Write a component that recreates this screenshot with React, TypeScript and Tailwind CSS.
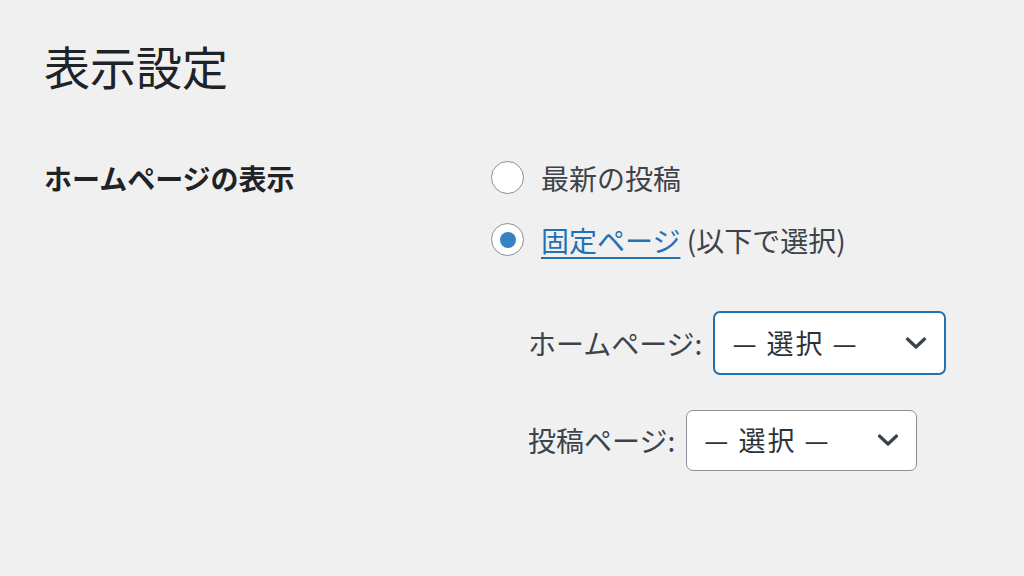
const jp = { fontFamily: '"Noto Sans CJK JP", "Noto Sans", sans-serif' };

function Chevron() {
  return (
    <svg width="22" height="14" viewBox="0 0 22 14" fill="none">
      <path d="M2.5 3 L11 11 L19.5 3" stroke="#3c434a" strokeWidth="3.2" strokeLinecap="round" strokeLinejoin="round" />
    </svg>
  );
}

function Select({ focused, width, height }: { focused?: boolean; width: string; height: string }) {
  return (
    <div
      className={`flex items-center justify-between bg-white rounded-[7px] pl-[17px] pr-[17px] ${width} ${height} ${
        focused ? "border-[2.5px] border-[#2271b1]" : "border border-[#8c8f94]"
      }`}
    >
      <span className="text-[27px] tracking-[2px] text-[#2c3338]">— 選択 —</span>
      <Chevron />
    </div>
  );
}

export default function App() {
  return (
    <div className="min-h-[576px] w-[1024px] bg-[#f0f0f1] px-[44px] pt-[36px]" style={jp}>
      <h1 className="text-[46px] leading-[1.3] text-[#1d2327] font-normal">表示設定</h1>

      <div className="flex mt-[62px]">
        <div className="w-[447px] text-[28px] font-bold text-[#1d2327] leading-[40px]">
          ホームページの表示
        </div>
        <div className="flex flex-col">
          <label className="flex items-center gap-[17px] h-[40px]">
            <span className="w-[33px] h-[33px] rounded-full bg-white border-[1.5px] border-[#8c8f94]" />
            <span className="text-[28px] text-[#3c434a]">最新の投稿</span>
          </label>
          <label className="flex items-center gap-[17px] h-[40px] mt-[22px]">
            <span className="w-[33px] h-[33px] rounded-full bg-white border-[1.5px] border-[#8c8f94] flex items-center justify-center">
              <span className="w-[16px] h-[16px] rounded-full bg-[#3582c4]" />
            </span>
            <span className="text-[28px] text-[#3c434a]">
              <span className="text-[#2271b1] underline underline-offset-[5px] decoration-[2px]">固定ページ</span> (以下で選択)
            </span>
          </label>

          <div className="ml-[37px] mt-[51px] flex flex-col gap-[35px]">
            <div className="flex items-center gap-[11px]">
              <span className="text-[28px] text-[#3c434a]">ホームページ:</span>
              <Select focused width="w-[233px]" height="h-[64px]" />
            </div>
            <div className="flex items-center gap-[11px]">
              <span className="text-[28px] text-[#3c434a]">投稿ページ:</span>
              <Select width="w-[231px]" height="h-[61px]" />
            </div>
          </div>
        </div>
      </div>
    </div>
  );
}
